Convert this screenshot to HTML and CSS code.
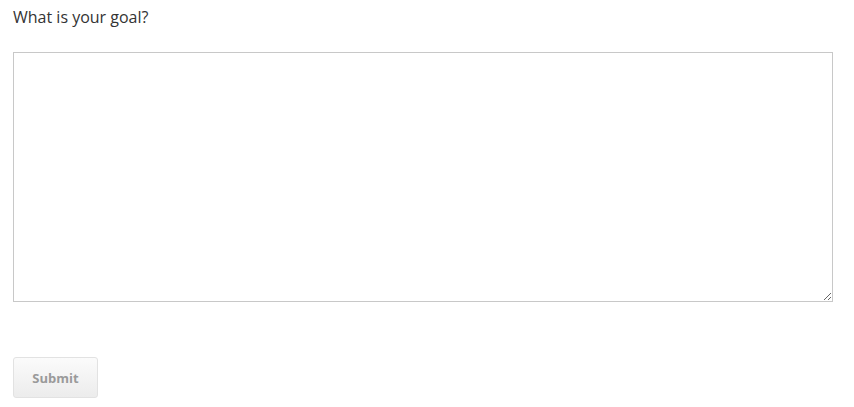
FILE: index.html
```html
<!DOCTYPE html>
<html lang="en">
<head>
    <meta charset="UTF-8">
    <meta name="viewport" content="width=device-width, initial-scale=1.0">
    <title>Goal</title>
    <link rel="stylesheet" href="styles.css">
</head>
<body>
    <form class="goal-form">
        <label for="goal">What is your goal?</label>
        <textarea id="goal" name="goal"></textarea>
        <button type="submit" disabled>Submit</button>
    </form>
</body>
</html>
```
FILE: styles.css
```css
body {
    font-family: 'Open Sans', sans-serif;
    margin: 0;
    padding: 0;
    background-color: #fff;
    color: #333;
}
.goal-form {
    display: flex;
    flex-direction: column;
    align-items: flex-start;
    padding: 5px 20px 0 13px;
}
label {
    font-size: 16px;
    line-height: 24px;
    color: #333;
    margin-bottom: 23px;
}
textarea {
    box-sizing: border-box;
    width: 820px;
    height: 250px;
    border: 1px solid #c8c8c8;
    margin: 0 0 55px;
    padding: 4px;
    font-family: inherit;
}
button {
    box-sizing: border-box;
    width: 85px;
    height: 41px;
    border: 1px solid #e2e2e2;
    border-radius: 3px;
    background: linear-gradient(#fbfbfb, #ececec);
    color: #9a9a9a;
    font-family: inherit;
    font-size: 13px;
    font-weight: bold;
    cursor: default;
}
```
